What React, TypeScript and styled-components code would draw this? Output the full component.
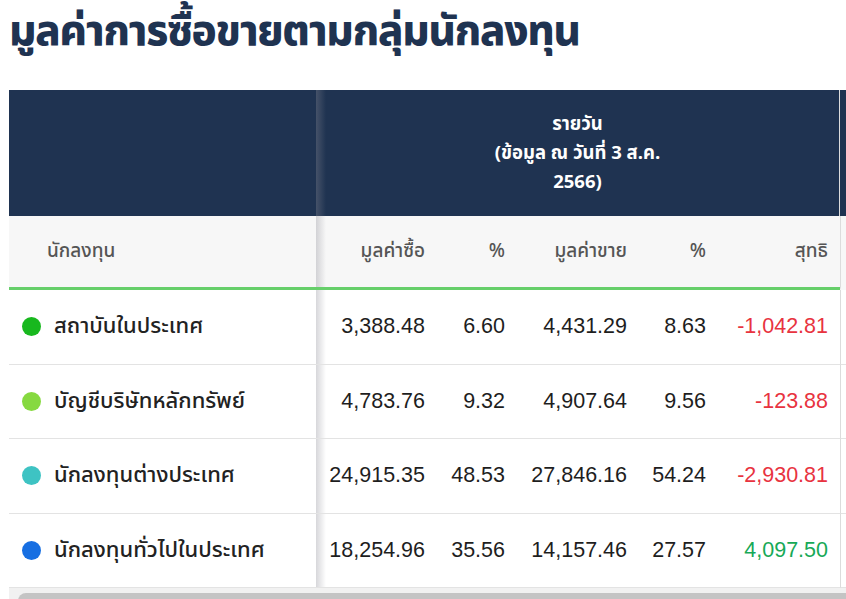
import React from 'react'
import styled, { createGlobalStyle } from 'styled-components'

const GlobalStyle = createGlobalStyle`
	html, body {
		margin: 0;
		padding: 0;
		background: #ffffff;
		overflow: hidden;
	}
	body {
		font-family: 'Noto Sans Thai', 'Noto Sans', 'Liberation Sans', sans-serif;
		color: #222222;
	}
`

const Page = styled.div`
	padding: 0 0 0 9px;
	width: 860px;
`

const Title = styled.h1`
	margin: 0;
	padding: 4px 0 0;
	height: 90px;
	box-sizing: border-box;
	font-size: 42px;
	font-weight: 800;
	letter-spacing: -1.25px;
	line-height: 56px;
	color: #1f3351;
`

const Scroller = styled.div`
	width: 851px;
	overflow: hidden;
`

const Table = styled.table`
	border-collapse: separate;
	border-spacing: 0;
	table-layout: fixed;
	width: 1000px;
`

const StickyCell = styled.th<{ $tone: 'dark' | 'light' | 'body' }>`
	position: relative;
	padding: 0;
	text-align: left;
	background: ${(p) => (p.$tone === 'dark' ? '#1f3351' : p.$tone === 'light' ? '#f7f7f7' : '#ffffff')};
	border-bottom: ${(p) => (p.$tone === 'light' ? '3px solid #66cf6a' : p.$tone === 'body' ? '1px solid #e3e3e3' : '0')};

	&::after {
		content: '';
		position: absolute;
		top: 0;
		right: -10px;
		width: 10px;
		height: 100%;
		background: linear-gradient(to right, rgba(140, 140, 150, 0.35), rgba(140, 140, 150, 0));
		z-index: 1;
	}
`

const GroupHead = styled.th`
	height: 126px;
	padding: 0;
	background: #1f3351;
	color: #ffffff;
	font-size: 18.5px;
	font-weight: 700;
	line-height: 29px;
	text-align: center;
	border-right: 1px solid #dcdcdc;
`

const NextHead = styled.th`
	background: #1f3351;
`

const SubRow = styled.tr`
	height: 74px;
	background: #f7f7f7;
`

const SubHead = styled.th`
	padding: 0 12px 0 0;
	font-size: 19px;
	font-weight: 500;
	color: #555555;
	text-align: right;
	border-bottom: 3px solid #66cf6a;
`

const SubHeadLabel = styled.span`
	display: block;
	padding-left: 38px;
	font-size: 19px;
	font-weight: 500;
	color: #555555;
`

const BodyRow = styled.tr`
	height: 74.5px;
`

const Investor = styled.div`
	display: flex;
	align-items: center;
	gap: 13px;
	padding-left: 13px;
	font-size: 22px;
	font-weight: 500;
	color: #222222;
`

const Dot = styled.span<{ $color: string }>`
	width: 19px;
	height: 19px;
	border-radius: 50%;
	background: ${(p) => p.$color};
	flex: none;
`

const Num = styled.td<{ $tone?: 'neg' | 'pos' }>`
	padding: 0 12px 0 0;
	text-align: right;
	font-family: 'Liberation Sans', Arial, sans-serif;
	font-size: 21.5px;
	color: ${(p) => (p.$tone === 'neg' ? '#e8333f' : p.$tone === 'pos' ? '#17a957' : '#1e1e1e')};
	border-bottom: 1px solid #e3e3e3;
`

const Edge = styled.td<{ $head?: boolean }>`
	border-left: 1px solid #dcdcdc;
	border-bottom: ${(p) => (p.$head ? '3px solid transparent' : '1px solid #e3e3e3')};
`

const ScrollTrack = styled.div`
	height: 11px;
	background: #f1f1f1;
	padding: 5px 0 0 9px;
`

const ScrollThumb = styled.div`
	height: 12px;
	border-radius: 8px 0 0 0;
	background: #c4c4c4;
`

type Row = {
	name: string
	color: string
	buy: string
	buyPct: string
	sell: string
	sellPct: string
	net: string
}

const rows: Row[] = [
	{ name: 'สถาบันในประเทศ', color: '#18b81e', buy: '3,388.48', buyPct: '6.60', sell: '4,431.29', sellPct: '8.63', net: '-1,042.81' },
	{ name: 'บัญชีบริษัทหลักทรัพย์', color: '#86d940', buy: '4,783.76', buyPct: '9.32', sell: '4,907.64', sellPct: '9.56', net: '-123.88' },
	{ name: 'นักลงทุนต่างประเทศ', color: '#3ec3c3', buy: '24,915.35', buyPct: '48.53', sell: '27,846.16', sellPct: '54.24', net: '-2,930.81' },
	{ name: 'นักลงทุนทั่วไปในประเทศ', color: '#176fe2', buy: '18,254.96', buyPct: '35.56', sell: '14,157.46', sellPct: '27.57', net: '4,097.50' },
]

const colWidths = [121, 80, 122, 79, 122]
const headLabels = ['มูลค่าซื้อ', '%', 'มูลค่าขาย', '%', 'สุทธิ']

export default function App() {
	return (
		<Page>
			<GlobalStyle />
			<Title>มูลค่าการซื้อขายตามกลุ่มนักลงทุน</Title>
			<Scroller>
				<Table>
					<colgroup>
						<col style={{ width: 307 }} />
						{colWidths.map((w, i) => (
							<col key={i} style={{ width: w }} />
						))}
						<col />
					</colgroup>
					<thead>
						<tr>
							<StickyCell $tone="dark" />
							<GroupHead colSpan={5}>
								รายวัน
								<br />
								(ข้อมูล ณ วันที่ 3 ส.ค.
								<br />
								2566)
							</GroupHead>
							<NextHead />
						</tr>
						<SubRow>
							<StickyCell $tone="light">
								<SubHeadLabel>นักลงทุน</SubHeadLabel>
							</StickyCell>
							{headLabels.map((label, i) => (
								<SubHead key={i}>{label}</SubHead>
							))}
							<Edge as="th" $head />
						</SubRow>
					</thead>
					<tbody>
						{rows.map((r) => (
							<BodyRow key={r.name}>
								<StickyCell as="td" $tone="body">
									<Investor>
										<Dot $color={r.color} />
										{r.name}
									</Investor>
								</StickyCell>
								<Num>{r.buy}</Num>
								<Num>{r.buyPct}</Num>
								<Num>{r.sell}</Num>
								<Num>{r.sellPct}</Num>
								<Num $tone={r.net.startsWith('-') ? 'neg' : 'pos'}>{r.net}</Num>
								<Edge />
							</BodyRow>
						))}
					</tbody>
				</Table>
				<ScrollTrack>
					<ScrollThumb />
				</ScrollTrack>
			</Scroller>
		</Page>
	)
}
